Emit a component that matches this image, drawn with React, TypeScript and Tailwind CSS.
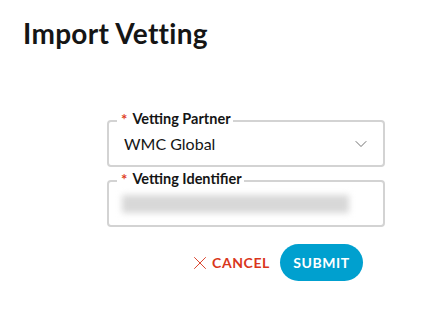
import { ChevronDown, X } from "lucide-react";

function Field({ label, children }: { label: string; children: React.ReactNode }) {
  return (
    <div className="relative h-[47px] rounded-[4px] border-2 border-[#d3d3d3] flex items-center pl-[13px] pr-[12px]">
      <span className="absolute -top-[12px] left-[8px] bg-white pl-[4px] pr-[2px] text-[14.5px] leading-[18px] font-bold text-[#151515] flex items-center gap-[5px]">
        <span className="text-[#e0401f] text-[15px]">*</span>
        {label}
      </span>
      {children}
    </div>
  );
}

export default function App() {
  return (
    <div
      className="w-[432px] h-[328px] bg-white px-[23px] pt-[15px]"
      style={{ fontFamily: "Lato, 'Open Sans', sans-serif" }}
    >
      <h1 className="text-[28px] leading-[36px] font-bold text-[#151515] tracking-[0.3px]">Import Vetting</h1>
      <div className="ml-[84px] w-[278px] mt-[69px] flex flex-col gap-[13px]">
        <Field label="Vetting Partner">
          <span className="flex-1 pl-[2px] text-[16px] text-[#151515]">WMC Global</span>
          <ChevronDown className="w-[20px] h-[20px] text-[#555]" strokeWidth={1} />
        </Field>
        <Field label="Vetting Identifier">
          <div className="w-[227px] h-[18px] bg-[#d8d8d8] blur-[3px]" />
        </Field>
        <div className="flex items-center justify-end gap-[10px] mt-[4px] pr-[22px]">
          <button className="flex items-center gap-[5px] text-[#d9361c] text-[14px] font-bold tracking-[0.6px]">
            <X className="w-[22px] h-[22px] -mr-[4px] -ml-[5px]" strokeWidth={1} />
            CANCEL
          </button>
          <button className="h-[37px] w-[83px] rounded-full bg-[#00a0cf] text-white text-[14px] font-bold tracking-[0.6px]">
            SUBMIT
          </button>
        </div>
      </div>
    </div>
  );
}
